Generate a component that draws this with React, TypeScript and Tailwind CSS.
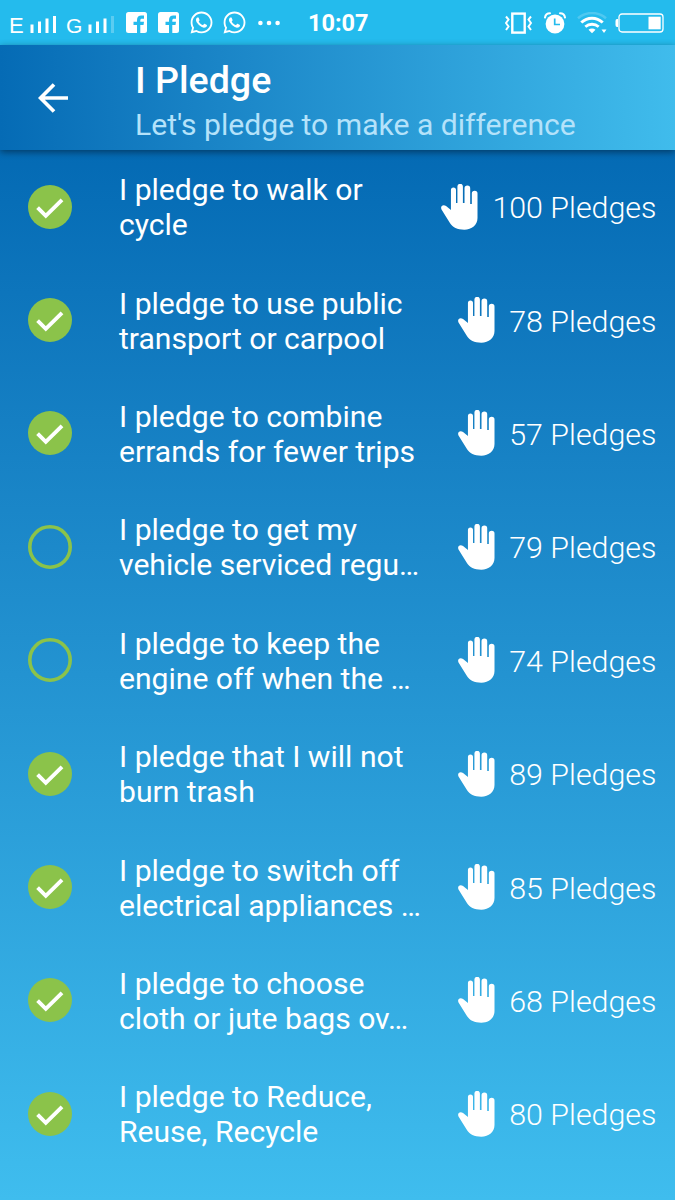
import { FaWhatsapp } from "react-icons/fa"

type Pledge = {
  lines: [string, string]
  count: number
  done: boolean
}

const pledges: Pledge[] = [
  { lines: ["I pledge to walk or", "cycle"], count: 100, done: true },
  { lines: ["I pledge to use public", "transport or carpool"], count: 78, done: true },
  { lines: ["I pledge to combine", "errands for fewer trips"], count: 57, done: true },
  { lines: ["I pledge to get my", "vehicle serviced regu…"], count: 79, done: false },
  { lines: ["I pledge to keep the", "engine off when the …"], count: 74, done: false },
  { lines: ["I pledge that I will not", "burn trash"], count: 89, done: true },
  { lines: ["I pledge to switch off", "electrical appliances …"], count: 85, done: true },
  { lines: ["I pledge to choose", "cloth or jute bags ov…"], count: 68, done: true },
  { lines: ["I pledge to Reduce,", "Reuse, Recycle"], count: 80, done: true },
]

function Signal({ weak = false }: { weak?: boolean }) {
  return (
    <svg className="mt-[4px] h-[18px] w-[26px] shrink-0" viewBox="0 0 26 18" fill="white">
      <rect x="0.5" y="8.5" width="3" height="8.5" />
      <rect x="8" y="5.5" width="3" height="11.5" />
      <rect x="15.5" y="2.5" width="3" height="14.5" />
      <rect x="23" y="0" width="3" height="17" opacity={weak ? 0.25 : 1} />
    </svg>
  )
}

function Facebook() {
  return (
    <svg className="size-[21px] shrink-0" viewBox="0 0 21 21">
      <rect width="21" height="21" rx="2.5" fill="white" />
      <path d="M11 21V13H7.5V9.8H11V8C11 5 12.8 3.6 15.2 3.6H18V6.8H16C14.8 6.8 14.3 7.3 14.3 8.4V9.8H18L17.5 13H14.3V21Z" fill="#24bbed" />
    </svg>
  )
}

function StatusBar() {
  return (
    <div className="flex h-[45px] items-center bg-[#24bbed] text-white">
      <div className="mt-[6px] ml-[9px] w-[21px] font-['Liberation_Sans',sans-serif] text-[22px] leading-none">E</div>
      <Signal />
      <div className="mt-[6px] ml-[10px] w-[22px] font-['Liberation_Sans',sans-serif] text-[21px] leading-none">G</div>
      <Signal weak />
      <div className="ml-[12px] flex gap-[10.5px]">
        <Facebook />
        <Facebook />
      </div>
      <FaWhatsapp className="ml-[10px] size-[25px] shrink-0" />
      <FaWhatsapp className="ml-[8.5px] size-[25px] shrink-0" />
      <svg className="ml-[11px] h-1.5 w-[22px] shrink-0" viewBox="0 0 22 6" fill="white">
        <circle cx="2.4" cy="3" r="2.3" />
        <circle cx="11" cy="3" r="2.3" />
        <circle cx="19.6" cy="3" r="2.3" />
      </svg>
      <div className="mt-[3px] ml-[28px] w-[60px] text-[23.5px] leading-none font-bold whitespace-nowrap">10:07</div>
      {/* vibrate */}
      <svg className="ml-[137px] h-[22px] w-[27px] shrink-0" viewBox="0 0 27 22" fill="none" stroke="white" strokeWidth="2">
        <rect x="7.3" y="1.6" width="12.4" height="19" strokeWidth="2.4" />
        <path d="M1 4.5L3.5 7.5L1 11L3.5 14.5L1 18M26 4.5L23.5 7.5L26 11L23.5 14.5L26 18" />
      </svg>
      {/* alarm */}
      <svg className="ml-[12px] h-[22px] w-[22px] shrink-0" viewBox="0 0 22 22" fill="none">
        <circle cx="11" cy="12" r="9.4" fill="white" />
        <path d="M1 5.5C1.4 3 3.5 1.3 6 1.3M16 1.3C18.5 1.3 20.6 3 21 5.5" stroke="white" strokeWidth="2" strokeLinecap="round" />
        <path d="M10.7 6.5V12.5H16" stroke="#24bbed" strokeWidth="1.7" />
      </svg>
      {/* wifi */}
      <svg className="ml-[11px] h-[22px] w-[31px] shrink-0" viewBox="0 0 31 22" fill="none" stroke="white" strokeWidth="2.5">
        <path d="M1 6.3C9-0.7 21-0.7 29 6.3" opacity="0.2" />
        <path d="M4.3 10.5C10.5 4.8 19.5 4.8 25.7 10.5" strokeWidth="3" />
        <path d="M8.3 14.8C12.2 11.4 17.8 11.4 21.7 14.8" strokeWidth="2.8" />
        <path d="M11.5 17.8C13.5 16.2 16.5 16.2 18.5 17.8L15 21.2Z" fill="white" stroke="none" />
        <path d="M24.5 17.5H29.5L27 21Z" fill="white" stroke="none" />
      </svg>
      {/* battery */}
      <svg className="ml-[7px] h-5 w-[49px] shrink-0" viewBox="0 0 49 20" fill="none">
        <path d="M3 6H2Q0.5 6 0.5 8V12Q0.5 14 2 14H3Z" fill="white" />
        <rect x="4" y="1" width="44" height="18" rx="3" stroke="white" strokeWidth="1.3" />
        <rect x="33.5" y="3.7" width="12.2" height="12.6" fill="white" />
      </svg>
    </div>
  )
}

function CheckCircle({ done }: { done: boolean }) {
  return (
    <svg className="size-11 shrink-0" viewBox="0 0 44 44" fill="none">
      {done ? (
        <>
          <circle cx="22" cy="22" r="22" fill="#8bc34a" />
          <path d="M9.6 22.6L17.8 30.8L34 14.8" stroke="white" strokeWidth="3.9" />
        </>
      ) : (
        <circle cx="22" cy="22" r="20.2" stroke="#8bc34a" strokeWidth="3.6" />
      )}
    </svg>
  )
}

function Hand() {
  return (
    <svg className="h-[46px] w-[36.5px] shrink-0" viewBox="0 0 36 46" fill="white" preserveAspectRatio="none">
      <path d="M9.8 26V6A2.5 2.5 0 0 1 14.8 6V19H16.2V2.5A2.6 2.6 0 0 1 21.6 2.5V19H23.2V4.2A2.7 2.7 0 0 1 28.8 4.2V20H30.4V9.5A2.7 2.7 0 0 1 36 9.5V34C36 41 30.5 45.7 23 45.7C16 45.7 11.5 43.5 8.5 38.5L0.5 25.5C-1 22 2 20.2 5 22Z" />
    </svg>
  )
}

function PledgeRow({ lines, count, done }: Pledge) {
  return (
    <li className="flex h-[113.4px] items-center pr-[18.5px] pl-7">
      <CheckCircle done={done} />
      <div className="ml-[47px] flex-1 pt-px text-[30.1px] leading-[35px] whitespace-nowrap">
        <p>{lines[0]}</p>
        <p>{lines[1]}</p>
      </div>
      <Hand />
      <span className="ml-[14.5px] pt-[2px] text-[30.4px] leading-[35px] font-light">{count} Pledges</span>
    </li>
  )
}

export default function App() {
  return (
    <div className="flex h-[1200px] w-[675px] flex-col overflow-hidden font-[Roboto,sans-serif] text-white">
      <StatusBar />
      <header className="relative flex h-[105px] items-center bg-linear-to-r from-[#056bb5] to-[#40bcec] shadow-[0_2px_7px_rgba(0,0,0,0.45)]">
        <svg className="ml-[38px] h-[30px] w-[30px] shrink-0" viewBox="0 0 30 30" fill="none" stroke="white" strokeWidth="3.7">
          <path d="M30 15H3M16 1.5L2.5 15L16 28.5" />
        </svg>
        <div className="ml-[67px] pt-[10px] whitespace-nowrap">
          <h1 className="text-[37.6px] leading-[45px] font-medium">I Pledge</h1>
          <p className="text-[30.1px] leading-[44px] text-[#b4e2fa]">Let's pledge to make a difference</p>
        </div>
      </header>
      <ul className="flex-1 bg-linear-to-b from-[#046ab4] to-[#3fbdee]">
        {pledges.map((pledge) => (
          <PledgeRow key={pledge.lines[0]} {...pledge} />
        ))}
      </ul>
    </div>
  )
}
